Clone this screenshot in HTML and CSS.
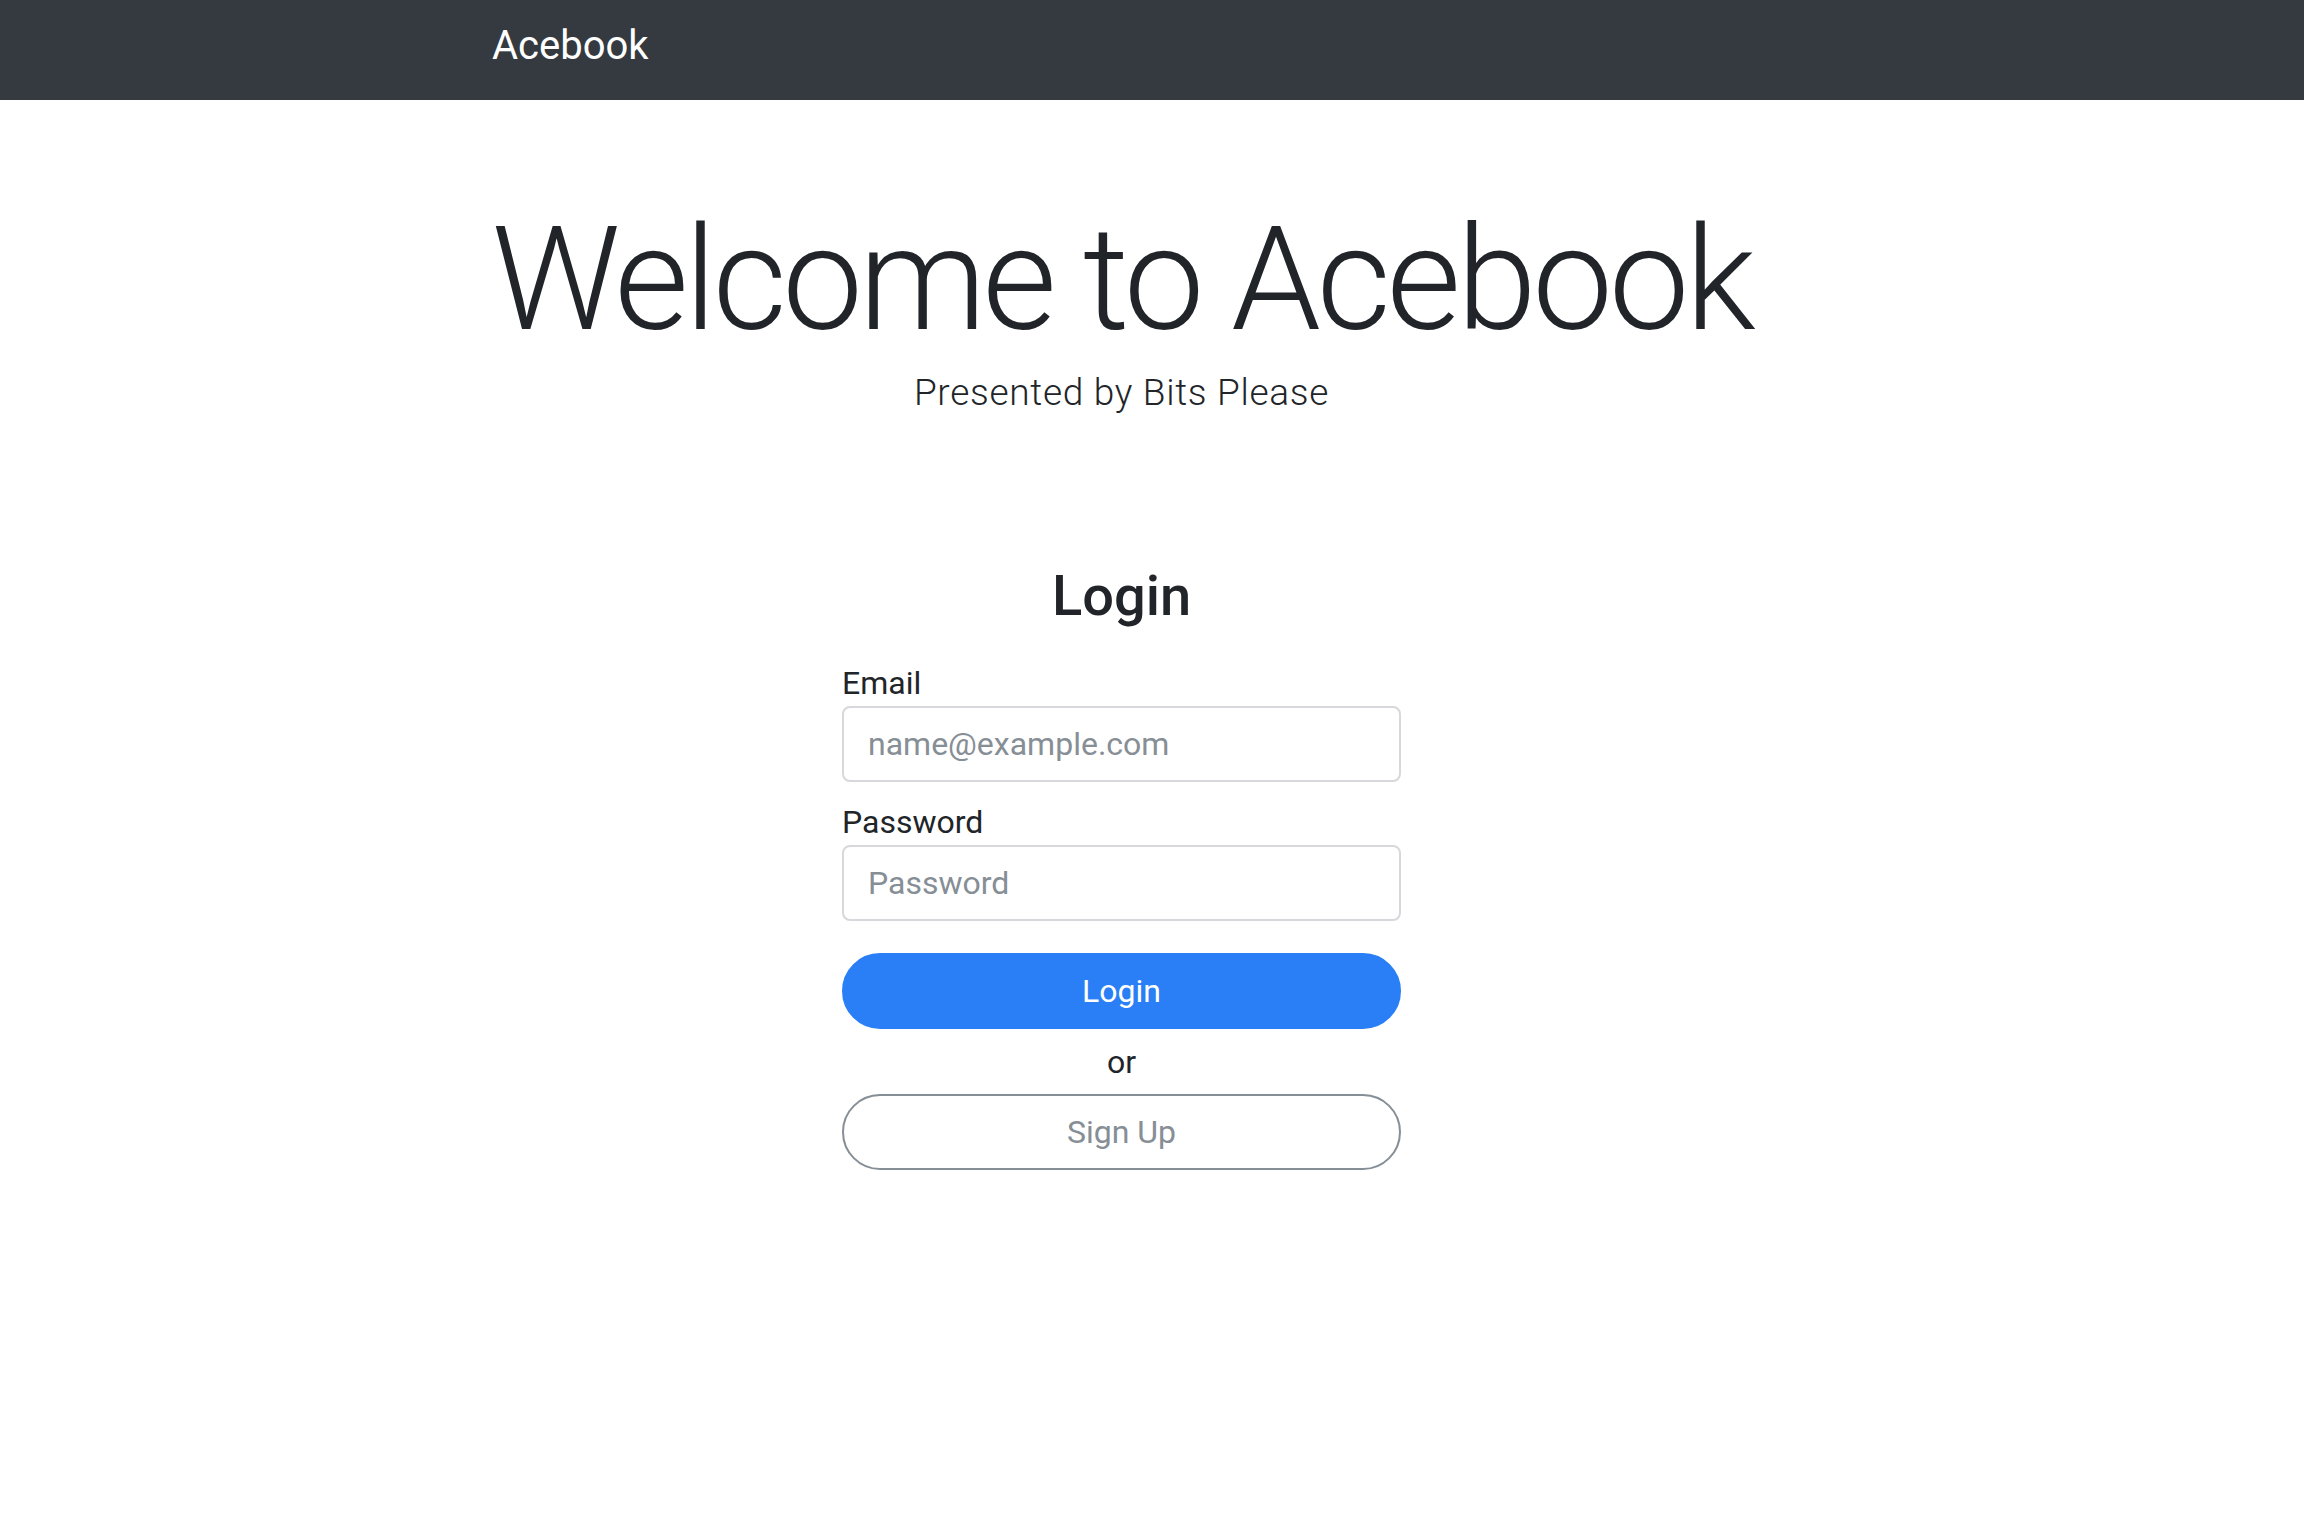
FILE: index.html
```html
<!DOCTYPE html>
<html lang="en">
<head>
<meta charset="utf-8">
<title>Acebook</title>
<link rel="stylesheet" href="styles.css">
</head>
<body>
<nav class="navbar">
  <div class="shell">
    <div class="container">
      <a class="brand" href="#">Acebook</a>
    </div>
  </div>
</nav>
<main class="shell">
  <div class="container">
    <header class="hero">
      <h1 class="title">Welcome to Acebook</h1>
      <p class="lead">Presented by Bits Please</p>
    </header>
    <section class="login">
      <h2 class="login-title">Login</h2>
      <form class="form">
        <div class="group">
          <label class="label" for="email">Email</label>
          <input class="input" id="email" type="email" placeholder="name@example.com">
        </div>
        <div class="group">
          <label class="label" for="password">Password</label>
          <input class="input" id="password" type="password" placeholder="Password">
        </div>
        <button class="btn btn-primary" type="button">Login</button>
        <p class="or">or</p>
        <button class="btn btn-outline" type="button">Sign Up</button>
      </form>
    </section>
  </div>
</main>
</body>
</html>
```

FILE: styles.css
```css
* { box-sizing: border-box; }

html, body {
  margin: 0;
  padding: 0;
  background: #ffffff;
  color: #212529;
  font-family: Roboto, "Liberation Sans", Arial, sans-serif;
}

.shell {
  padding-right: 61px;
}

.container {
  width: 1259px;
  margin: 0 auto;
}

.navbar {
  background: #343a40;
  height: 100px;
}

.navbar .container {
  padding-top: 16px;
}

.brand {
  display: inline-block;
  color: #ffffff;
  text-decoration: none;
  font-size: 40px;
  line-height: 60px;
}

.hero {
  padding-top: 94px;
  text-align: center;
}

.title {
  margin: 0 -40px;
  font-size: 144px;
  line-height: 172px;
  font-weight: 300;
  letter-spacing: -4.3px;
  white-space: nowrap;
  color: #212529;
}

.lead {
  margin: 0;
  font-size: 37px;
  line-height: 54px;
  font-weight: 300;
  letter-spacing: 0.7px;
  color: #212529;
}

.login {
  padding-top: 143px;
  text-align: center;
}

.login-title {
  margin: 0 0 30px;
  font-size: 56px;
  line-height: 67px;
  font-weight: 500;
}

.form {
  width: 559px;
  margin: 0 auto;
  text-align: left;
}

.group {
  margin-bottom: 17px;
}

.group + .group {
  margin-bottom: 32px;
}

.label {
  display: block;
  font-size: 32px;
  line-height: 46px;
  color: #212529;
}

.input {
  display: block;
  width: 100%;
  height: 76px;
  padding: 0 24px;
  border: 2px solid #d6d8db;
  border-radius: 8px;
  font-family: inherit;
  font-size: 32px;
  color: #495057;
  background: #ffffff;
  outline: none;
}

.input::placeholder {
  color: #868e96;
  opacity: 1;
}

.btn {
  display: block;
  width: 100%;
  height: 76px;
  border-radius: 38px;
  font-family: inherit;
  font-size: 32px;
  line-height: 1;
  cursor: pointer;
}

.btn-primary {
  background: #2a7ff6;
  border: 2px solid #2a7ff6;
  color: #ffffff;
}

.btn-outline {
  background: #ffffff;
  border: 2px solid #868e96;
  color: #868e96;
}

.or {
  margin: 9px 0 8px;
  font-size: 32px;
  line-height: 48px;
  text-align: center;
  color: #212529;
}
```
